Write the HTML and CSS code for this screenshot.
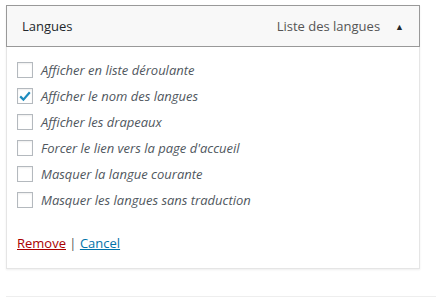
FILE: index.html
```html
<!DOCTYPE html>
<html lang="fr">
<head>
  <meta charset="UTF-8" />
  <title>Widget Langues</title>
  <link rel="stylesheet" href="styles.css">
</head>
<body>
  <div class="widget">
    <div class="widget-top">
      <h3 class="widget-title">Langues</h3>
      <span class="widget-desc">Liste des langues</span>
      <span class="widget-toggle">&#9650;</span>
    </div>
    <div class="widget-inside">
      <ul class="options">
        <li><label><span class="box"></span>Afficher en liste déroulante</label></li>
        <li><label><span class="box checked">
          <svg width="14" height="14" viewBox="0 0 14 14"><path d="M2.2 7.4 L5.4 10.6 L11.8 3.2" fill="none" stroke="#1e8cbe" stroke-width="2.2"/></svg>
        </span>Afficher le nom des langues</label></li>
        <li><label><span class="box"></span>Afficher les drapeaux</label></li>
        <li><label><span class="box"></span>Forcer le lien vers la page d'accueil</label></li>
        <li><label><span class="box"></span>Masquer la langue courante</label></li>
        <li><label><span class="box"></span>Masquer les langues sans traduction</label></li>
      </ul>
      <div class="actions">
        <a href="#" class="remove">Remove</a> | <a href="#" class="cancel">Cancel</a>
      </div>
    </div>
  </div>
  <div class="divider"></div>
</body>
</html>
```

FILE: styles.css
```css
body {
  margin: 0;
  padding: 5px 0 0 6px;
  background: #fff;
  font-family: 'Open Sans', sans-serif;
  font-size: 13px;
  color: #444;
}

.widget {
  width: 414px;
  box-shadow: 0 1px 2px rgba(0,0,0,0.07);
}

.widget-top {
  display: flex;
  align-items: center;
  height: 40px;
  padding: 0 15px 0 15px;
  background: #f8f8f8;
  border: 1px solid #999;
}

.widget-title {
  margin: 0;
  flex: 1;
  font-size: 13px;
  font-weight: normal;
  color: #23282d;
}

.widget-desc {
  color: #555;
  font-size: 13px;
}

.widget-toggle {
  margin-left: 15px;
  font-size: 9px;
  color: #23282d;
}

.widget-inside {
  border: 1px solid #e5e5e5;
  border-top: none;
  padding: 15px 10px 11px 10px;
}

.options {
  list-style: none;
  margin: 0;
  padding: 0;
  display: flex;
  flex-direction: column;
  gap: 10px;
}

.options label {
  display: flex;
  align-items: center;
  font-style: italic;
  color: #50575e;
  font-size: 13px;
  line-height: 16px;
}

.box {
  width: 14px;
  height: 14px;
  border: 1px solid #b4b9be;
  margin-right: 8px;
  display: flex;
  align-items: center;
  justify-content: center;
  box-shadow: inset 0 1px 2px rgba(0,0,0,0.07);
}

.actions {
  margin-top: 26px;
  font-size: 13px;
  color: #555;
  padding-bottom: 5px;
}

.remove {
  color: #a00;
}

.cancel {
  color: #0073aa;
}

.divider {
  margin-top: 27px;
  border-top: 1px solid #eee;
}
```
